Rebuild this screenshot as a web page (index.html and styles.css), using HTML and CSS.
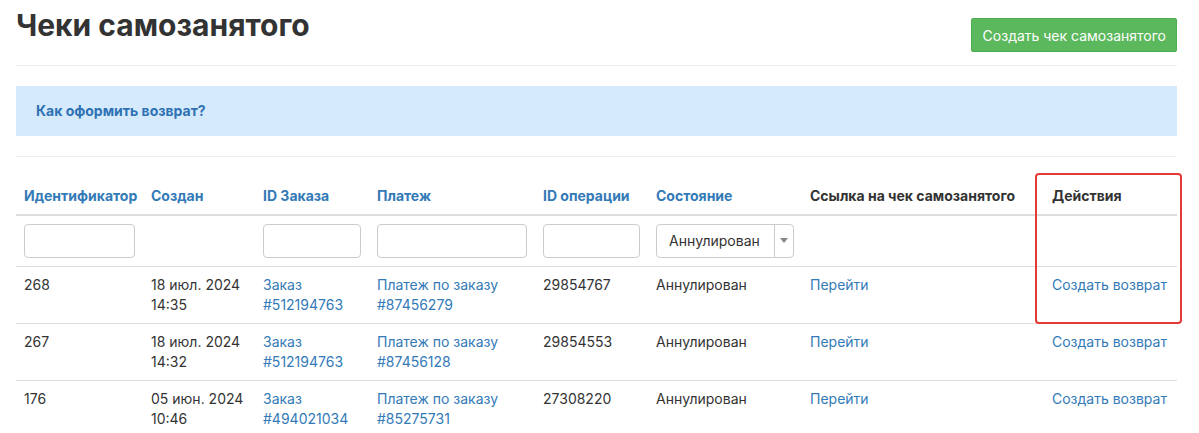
FILE: index.html
```html
<!DOCTYPE html>
<html lang="ru">
<head>
  <meta charset="UTF-8" />
  <title>Чеки самозанятого</title>
  <link rel="stylesheet" href="styles.css">
</head>
<body>

  <div class="container">
    <div class="page-header">
      <h1>Чеки самозанятого</h1>
      <button class="btn-create">Создать чек самозанятого</button>
    </div>

    <div class="alert-info">
      <a href="#">Как оформить возврат?</a>
    </div>

    <hr class="divider">

    <div class="table-wrap">
      <table class="grid">
        <colgroup>
          <col style="width: 127px">
          <col style="width: 112px">
          <col style="width: 114px">
          <col style="width: 166px">
          <col style="width: 113px">
          <col style="width: 154px">
          <col style="width: 242px">
          <col style="width: 133px">
        </colgroup>
        <thead>
          <tr class="head-row">
            <th><a href="#">Идентификатор</a></th>
            <th><a href="#">Создан</a></th>
            <th><a href="#">ID Заказа</a></th>
            <th><a href="#">Платеж</a></th>
            <th><a href="#">ID операции</a></th>
            <th><a href="#">Состояние</a></th>
            <th>Ссылка на чек самозанятого</th>
            <th>Действия</th>
          </tr>
          <tr class="filter-row">
            <td><input type="text"></td>
            <td></td>
            <td><input type="text"></td>
            <td><input type="text"></td>
            <td><input type="text"></td>
            <td>
              <div class="select">
                <span class="select-value">Аннулирован</span>
                <span class="select-arrow"></span>
              </div>
            </td>
            <td></td>
            <td></td>
          </tr>
        </thead>
        <tbody>
          <tr>
            <td>268</td>
            <td>18 июл. 2024<br>14:35</td>
            <td><a href="#">Заказ<br>#512194763</a></td>
            <td><a href="#">Платеж по заказу<br>#87456279</a></td>
            <td>29854767</td>
            <td>Аннулирован</td>
            <td><a href="#">Перейти</a></td>
            <td><a href="#">Создать возврат</a></td>
          </tr>
          <tr>
            <td>267</td>
            <td>18 июл. 2024<br>14:32</td>
            <td><a href="#">Заказ<br>#512194763</a></td>
            <td><a href="#">Платеж по заказу<br>#87456128</a></td>
            <td>29854553</td>
            <td>Аннулирован</td>
            <td><a href="#">Перейти</a></td>
            <td><a href="#">Создать возврат</a></td>
          </tr>
          <tr>
            <td>176</td>
            <td>05 июн. 2024<br>10:46</td>
            <td><a href="#">Заказ<br>#494021034</a></td>
            <td><a href="#">Платеж по заказу<br>#85275731</a></td>
            <td>27308220</td>
            <td>Аннулирован</td>
            <td><a href="#">Перейти</a></td>
            <td><a href="#">Создать возврат</a></td>
          </tr>
        </tbody>
      </table>
      <!-- highlight around the actions column -->
      <div class="highlight"></div>
    </div>
  </div>

</body>
</html>
```

FILE: styles.css
```css
body {
  margin: 0;
  font-family: Inter, "Noto Sans", sans-serif;
  font-size: 14px;
  line-height: 20px;
  color: #333;
  background-color: #fff;
}

a {
  color: #337ab7;
  text-decoration: none;
}

.container {
  padding: 0 22px 0 16px;
}

.page-header {
  display: flex;
  justify-content: space-between;
  align-items: flex-start;
  padding: 9px 0 13px;
  border-bottom: 1px solid #eee;
}

.page-header h1 {
  margin: 0;
  font-size: 30px;
  line-height: 33px;
  font-weight: 700;
  color: #333;
}

.btn-create {
  margin-top: 9px;
  height: 34px;
  padding: 0 10px 0 11px;
  font-family: inherit;
  font-size: 14px;
  color: #fff;
  background-color: #5cb85c;
  border: 1px solid #4cae4c;
  border-radius: 2px;
  cursor: pointer;
}

.alert-info {
  margin-top: 20px;
  height: 50px;
  line-height: 50px;
  padding: 0 20px;
  background-color: #d5eafc;
}

.alert-info a {
  font-weight: 700;
  color: #2f72b4;
}

.divider {
  margin: 20px 0 0;
  border: 0;
  border-top: 1px solid #eee;
}

.table-wrap {
  position: relative;
  margin-top: 21px;
}

.grid {
  width: 100%;
  table-layout: fixed;
  border-collapse: collapse;
}

.grid th,
.grid td {
  padding: 8px;
  text-align: left;
}

.grid th {
  font-weight: 700;
  vertical-align: bottom;
  border-bottom: 2px solid #ddd;
}

.grid td {
  vertical-align: top;
  border-top: 1px solid #ddd;
}

.filter-row td {
  border-top: 0;
}

.grid input {
  display: block;
  box-sizing: border-box;
  width: 100%;
  height: 34px;
  margin: 0;
  border: 1px solid #ccc;
  border-radius: 4px;
  background: #fff;
}

.select {
  display: flex;
  box-sizing: border-box;
  height: 34px;
  border: 1px solid #ccc;
  border-radius: 4px;
  background: #fff;
}

.select-value {
  flex: 1;
  padding-left: 12px;
  line-height: 32px;
  color: #333;
}

.select-arrow {
  position: relative;
  width: 18px;
  border-left: 1px solid #ccc;
}

.select-arrow::after {
  content: "";
  position: absolute;
  left: 5px;
  top: 13px;
  border-left: 4px solid transparent;
  border-right: 4px solid transparent;
  border-top: 5px solid #888;
}

.highlight {
  position: absolute;
  left: 1019px;
  top: -5px;
  width: 143px;
  height: 147px;
  border: 2px solid #e53935;
  border-radius: 4px;
}
```
